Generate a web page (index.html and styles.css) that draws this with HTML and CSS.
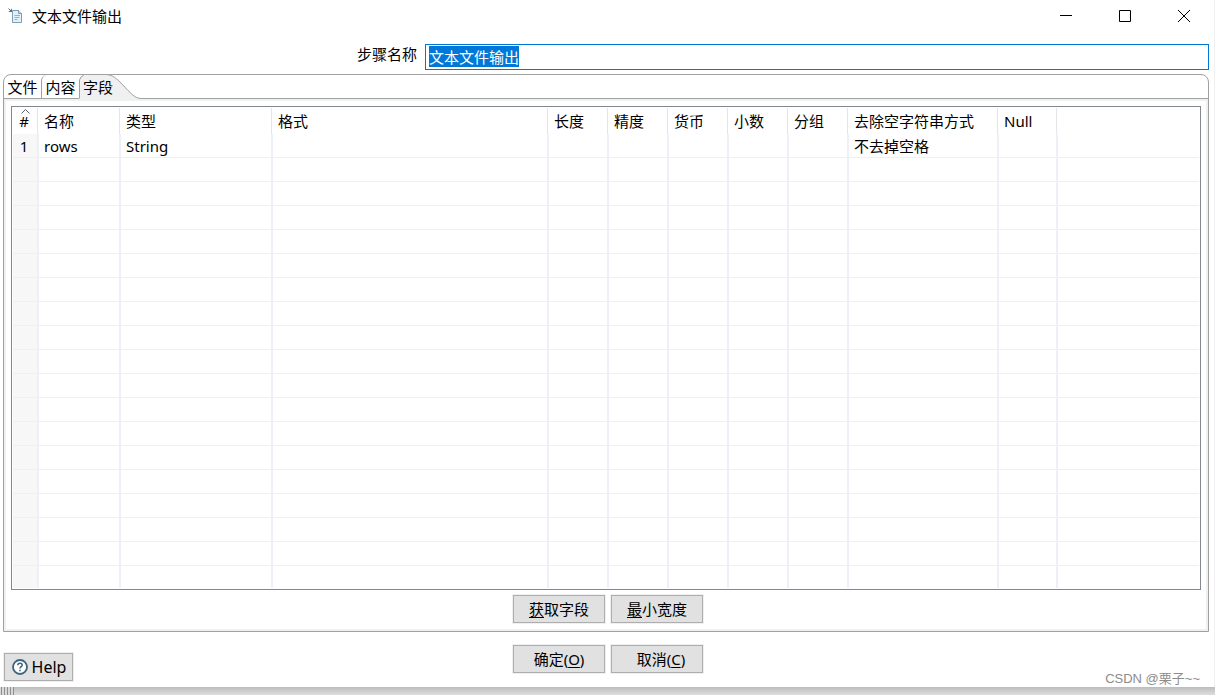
FILE: index.html
```html
<!DOCTYPE html>
<html lang="zh-CN">
<head>
<meta charset="utf-8">
<title>文本文件输出</title>
<link rel="stylesheet" href="styles.css">
</head>
<body>
<div class="dialog">
  <header class="titlebar">
    <svg class="app-icon" width="16" height="16" viewBox="0 0 16 16" aria-hidden="true">
      <path d="M4.500 2.500h6l3 3v9h-9z" fill="#e4f0f7" stroke="#7d9fb5"/>
      <path d="M10.500 2v3.500h3.500" fill="#b9d2e0" stroke="#7d9fb5"/>
      <path d="M6.500 7.500h5.500M6.500 9.500h5M6.500 11.500h3" fill="none" stroke="#8fb3c9"/>
      <path d="M0.500 0.500l3 3" fill="none" stroke="#4f7084"/>
      <path d="M4 0.500v3.500H0.500z" fill="#4f7084"/>
    </svg>
    <h1 class="title">文本文件输出</h1>
    <div class="window-controls">
      <button class="window-button" type="button" aria-label="最小化"><svg width="14" height="14" viewBox="0 0 14 14"><path d="M1 6.500h12"/></svg></button>
      <button class="window-button" type="button" aria-label="最大化"><svg width="14" height="14" viewBox="0 0 14 14"><path d="M1.500 1.500h11v11h-11z"/></svg></button>
      <button class="window-button" type="button" aria-label="关闭"><svg width="14" height="14" viewBox="0 0 14 14"><path d="M1 1l12 12M13 1L1 13"/></svg></button>
    </div>
  </header>

  <div class="step-row">
    <label class="step-label" for="step-name">步骤名称</label>
    <input class="step-input" id="step-name" type="text" value="文本文件输出" spellcheck="false">
  </div>

  <main class="folder">
    <div class="tabs" role="tablist">
      <button class="tab" type="button" role="tab" aria-selected="false">文件</button>
      <button class="tab tab-divided" type="button" role="tab" aria-selected="false">内容</button>
      <button class="tab tab-active" type="button" role="tab" aria-selected="true">
        <svg class="tab-shape" width="63" height="25" viewBox="0 0 63 25" aria-hidden="true">
          <path d="M0.500 25V6L2 3L5.500 0.500H26C32 0.500 36 3 41 8L49 16.500C54 21.500 57 24.500 63 24.500V25z" fill="#f0f0f0"/>
          <path d="M0.500 24V6L2 3L5.500 0.500H26C32 0.500 36 3 41 8L49 16.500C54 21.500 57 24.500 63 24.500" fill="none" stroke="#a0a0a0"/>
        </svg>
        <span class="tab-text">字段</span>
      </button>
    </div>
    <section class="panel" role="tabpanel">
      <div class="grid-frame">
        <div class="grid-view">
          <table class="grid">
            <colgroup>
              <col class="col-index"><col class="col-name"><col class="col-type"><col class="col-format">
              <col class="col-short"><col class="col-short"><col class="col-short"><col class="col-short"><col class="col-short">
              <col class="col-trim"><col class="col-null"><col>
            </colgroup>
            <thead>
              <tr>
                <th class="sorted" scope="col"><svg class="sort-mark" width="9" height="5" viewBox="0 0 9 5" aria-hidden="true"><path d="M0.500 4.500l4-4l4 4" fill="none" stroke="#606060"/></svg>#</th>
                <th scope="col">名称</th><th scope="col">类型</th><th scope="col">格式</th><th scope="col">长度</th><th scope="col">精度</th><th scope="col">货币</th><th scope="col">小数</th><th scope="col">分组</th><th scope="col">去除空字符串方式</th><th scope="col">Null</th><th></th>
              </tr>
            </thead>
            <tbody>
              <tr><td>1</td><td>rows</td><td>String</td><td></td><td></td><td></td><td></td><td></td><td></td><td>不去掉空格</td><td></td><td></td></tr>
              <tr><td></td><td></td><td></td><td></td><td></td><td></td><td></td><td></td><td></td><td></td><td></td><td></td></tr>
              <tr><td></td><td></td><td></td><td></td><td></td><td></td><td></td><td></td><td></td><td></td><td></td><td></td></tr>
              <tr><td></td><td></td><td></td><td></td><td></td><td></td><td></td><td></td><td></td><td></td><td></td><td></td></tr>
              <tr><td></td><td></td><td></td><td></td><td></td><td></td><td></td><td></td><td></td><td></td><td></td><td></td></tr>
              <tr><td></td><td></td><td></td><td></td><td></td><td></td><td></td><td></td><td></td><td></td><td></td><td></td></tr>
              <tr><td></td><td></td><td></td><td></td><td></td><td></td><td></td><td></td><td></td><td></td><td></td><td></td></tr>
              <tr><td></td><td></td><td></td><td></td><td></td><td></td><td></td><td></td><td></td><td></td><td></td><td></td></tr>
              <tr><td></td><td></td><td></td><td></td><td></td><td></td><td></td><td></td><td></td><td></td><td></td><td></td></tr>
              <tr><td></td><td></td><td></td><td></td><td></td><td></td><td></td><td></td><td></td><td></td><td></td><td></td></tr>
              <tr><td></td><td></td><td></td><td></td><td></td><td></td><td></td><td></td><td></td><td></td><td></td><td></td></tr>
              <tr><td></td><td></td><td></td><td></td><td></td><td></td><td></td><td></td><td></td><td></td><td></td><td></td></tr>
              <tr><td></td><td></td><td></td><td></td><td></td><td></td><td></td><td></td><td></td><td></td><td></td><td></td></tr>
              <tr><td></td><td></td><td></td><td></td><td></td><td></td><td></td><td></td><td></td><td></td><td></td><td></td></tr>
              <tr><td></td><td></td><td></td><td></td><td></td><td></td><td></td><td></td><td></td><td></td><td></td><td></td></tr>
              <tr><td></td><td></td><td></td><td></td><td></td><td></td><td></td><td></td><td></td><td></td><td></td><td></td></tr>
              <tr><td></td><td></td><td></td><td></td><td></td><td></td><td></td><td></td><td></td><td></td><td></td><td></td></tr>
              <tr><td></td><td></td><td></td><td></td><td></td><td></td><td></td><td></td><td></td><td></td><td></td><td></td></tr>
              <tr><td></td><td></td><td></td><td></td><td></td><td></td><td></td><td></td><td></td><td></td><td></td><td></td></tr>
            </tbody>
          </table>
        </div>
      </div>
      <div class="actions">
        <button class="button" type="button"><u>获</u>取字段</button>
        <button class="button" type="button"><u>最</u>小宽度</button>
      </div>
    </section>
  </main>

  <footer class="footer">
    <button class="button button-help" type="button">
      <svg width="16" height="16" viewBox="0 0 16 16" aria-hidden="true">
        <circle cx="8" cy="8" r="7" fill="#fff" stroke="#3d6480" stroke-width="1.800"/>
        <path d="M5.800 6.300C5.800 3.600 10.200 3.700 10.200 6.200C10.200 7.700 8 7.600 8 9.400" fill="none" stroke="#3d6480" stroke-width="1.500"/>
        <path d="M8 10.700v1.600" stroke="#3d6480" stroke-width="1.600"/>
      </svg>
      Help
    </button>
    <div class="actions">
      <button class="button" type="button">确定(<u>O</u>)</button>
      <button class="button" type="button">&nbsp;&nbsp;取消(<u>C</u>)</button>
    </div>
    <span class="watermark">CSDN @栗子~~</span>
  </footer>
</div>
<div class="shadow"><div class="shadow-ticks"></div></div>
<script src="main.js"></script>
</body>
</html>
```
FILE: styles.css
```css
* {
  box-sizing: border-box;
}

body {
  display: flex;
  flex-direction: column;
  height: 100vh;
  margin: 0;
  background: #fff;
  color: #000;
  font: 15px/20px "Noto Sans", "Noto Sans CJK SC", sans-serif;
}

button,
input {
  font: inherit;
  color: inherit;
}

.dialog {
  display: flex;
  flex: 1;
  flex-direction: column;
  min-height: 0;
  border-right: 1px solid #f0f0f0;
}

.titlebar {
  display: flex;
  align-items: center;
  height: 32px;
  padding: 0 1px 0 8px;
}

.title {
  flex: 1;
  margin: 0 0 0 8px;
  font-size: 15px;
  font-weight: 400;
}

.window-controls {
  display: flex;
  height: 100%;
}

.window-button {
  display: flex;
  align-items: center;
  justify-content: center;
  width: 59px;
  padding: 0;
  border: 0;
  background: none;
}

.window-button svg {
  fill: none;
  stroke: #000;
}

.step-row {
  display: flex;
  margin-top: 12px;
}

.step-label {
  flex: 0 0 35%;
  padding-right: 8px;
  text-align: right;
}

.step-input {
  flex: 1;
  height: 26px;
  margin-right: 5px;
  padding: 0 3px 2px;
  border: 1px solid #0078d7;
  border-radius: 0;
  outline: 0;
  background: #fff;
}

.step-input::selection {
  background: #0078d7;
  color: #fff;
}

.folder {
  display: flex;
  flex: 1;
  flex-direction: column;
  min-height: 0;
  margin: 4px 5px 0 3px;
  border: 1px solid #a0a0a0;
  border-radius: 8px 8px 0 0;
}

.tabs {
  display: flex;
  height: 24px;
  border-bottom: 1px solid #a0a0a0;
}

.tab {
  width: 37px;
  padding: 0;
  border: 0;
  background: none;
}

.tab-divided {
  width: 38px;
  border-left: 1px solid #a0a0a0;
  border-radius: 6px 0 0 0;
}

.tab-active {
  position: relative;
  width: 62px;
  padding-left: 4px;
  text-align: left;
}

.tab-shape {
  position: absolute;
  top: -1px;
  left: 0;
}

.tab-text {
  position: relative;
}

.panel {
  display: flex;
  flex: 1;
  flex-direction: column;
  gap: 5px;
  min-height: 0;
  padding: 5px 5px 6px;
  border: 2px solid #f0f0f0;
}

.grid-frame {
  display: flex;
  flex: 1;
  min-height: 0;
  padding: 1px;
  border: 1px solid #828790;
}

.grid-view {
  flex: 1;
  overflow: hidden;
}

.grid {
  width: 100%;
  table-layout: fixed;
  border-collapse: separate;
  border-spacing: 0;
}

.col-index { width: 26px; }
.col-name { width: 82px; }
.col-type { width: 152px; }
.col-format { width: 276px; }
.col-short { width: 60px; }
.col-trim { width: 150px; }
.col-null { width: 59px; }

.grid th,
.grid td {
  padding: 0 0 0 5px;
  font-weight: 400;
  text-align: left;
  white-space: nowrap;
}

.grid th {
  height: 26px;
  background: linear-gradient(#e5e5e5, #e5e5e5) right 1px top / 1px 100% no-repeat;
}

.grid td {
  height: 24px;
  border-right: 2px solid #edf1f7;
  border-bottom: 1px solid #f0f0f0;
}

.grid th:last-child,
.grid td:last-child {
  border-right: 0;
  background: none;
}

.grid td:first-child {
  padding: 0 2px 0 0;
  background: #f7f7f7;
  text-align: center;
}

.grid .sorted {
  position: relative;
  padding: 0 4px 0 0;
  text-align: center;
}

.sort-mark {
  position: absolute;
  top: 1px;
  left: 8px;
}

.actions {
  display: flex;
  gap: 6px;
  justify-content: center;
  padding-left: 4px;
}

.button {
  width: 92px;
  height: 28px;
  padding: 0;
  border: 1px solid #adadad;
  background: #e1e1e1;
  box-shadow: 0 0 0 1px #f0f0f0;
}

.button u {
  text-underline-offset: 2px;
}

.footer {
  display: grid;
  grid-template-columns: 1fr auto 1fr;
  height: 55px;
  padding: 13px 2px 0 0;
}

.button-help {
  display: flex;
  gap: 4px;
  align-items: center;
  justify-content: center;
  width: 69px;
  margin: 8px 0 0 4px;
  padding-left: 1px;
  font-size: 16px;
}

.watermark {
  align-self: end;
  justify-self: end;
  margin-right: 12px;
  color: #8c8c8c;
  font: 13px/16px "Liberation Sans", "Noto Sans CJK SC", sans-serif;
}

.shadow {
  height: 8px;
  background: linear-gradient(#bcbcbc, #dedede);
}

.shadow-ticks {
  width: 14px;
  height: 8px;
  background: repeating-linear-gradient(90deg, #d8d8d8 0 1px, #909090 1px 2px, #d8d8d8 2px 3px);
}
```
FILE: main.js
```js
const stepName = document.getElementById("step-name");
stepName.focus();
stepName.select();
```
